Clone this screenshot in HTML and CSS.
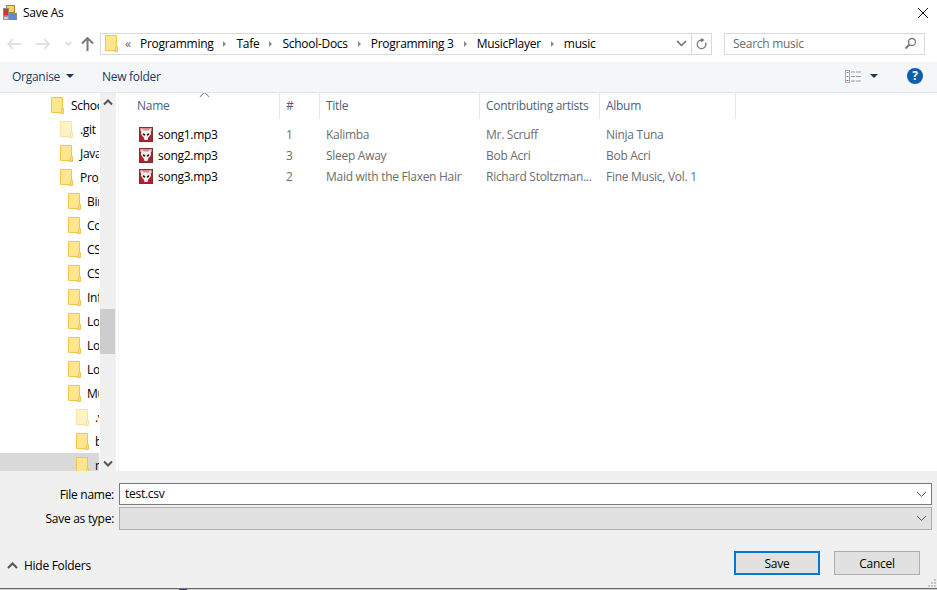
FILE: index.html
```html
<!DOCTYPE html>
<html lang="en">
<head>
<meta charset="UTF-8" />
<title>Save As</title>
<link rel="stylesheet" href="styles.css">
</head>
<body>

<svg class="sprites" width="0" height="0">
  <symbol id="folder" viewBox="0 0 13 17">
    <path d="M.5.5h11v15H.5z" fill="#ffe68f" stroke="#eec64a"/>
    <path d="M10.500 11.500h2v5h-3v-1h1z" fill="#ffe68f" stroke="#eec64a" stroke-width="1"/>
  </symbol>
  <symbol id="music" viewBox="0 0 14 15">
    <rect x=".5" y=".5" width="13" height="14" fill="#b3222a" stroke="#7d3034"/>
    <rect x="1" y="1" width="12" height="3" fill="#d9888a"/>
    <path d="M2.500 1L4.500 3.500h5L11.500 1 12 7 9 11 8.500 13h-3L5 11 2 7z" fill="#f6f2f2"/>
    <ellipse cx="5" cy="7.500" rx="1.400" ry="1" fill="#1c1c1c" transform="rotate(30 5 7.500)"/>
    <ellipse cx="9" cy="7.500" rx="1.400" ry="1" fill="#1c1c1c" transform="rotate(-30 9 7.500)"/>
  </symbol>
</svg>

<div class="dialog">
  <header class="titlebar">
    <svg class="app-icon" width="16" height="16" viewBox="0 0 16 16">
      <rect x="3.500" y=".5" width="8" height="7" fill="#f4d35e" stroke="#a88a2c"/>
      <rect x=".5" y="3.500" width="5" height="7" fill="#d9332b" stroke="#8a8a8a"/>
      <rect x="6.500" y="8.500" width="7" height="6" fill="#4f8fe0" stroke="#8a8a8a"/>
      <rect x=".5" y="11.500" width="5" height="3" fill="#cfcfcf" stroke="#9a9a9a"/>
    </svg>
    <span class="title">Save As</span>
    <svg class="close" width="12" height="12" viewBox="0 0 12 12"><path d="M1 1l10 10M11 1L1 11" stroke="#111" stroke-width="1" fill="none"/></svg>
  </header>

  <nav class="navbar">
    <div class="nav-btns">
      <svg class="nav-back" width="14" height="12" viewBox="0 0 14 12"><path d="M6 1L1 6l5 5M1 6h13" stroke="#e2e2e2" stroke-width="1.800" fill="none"/></svg>
      <svg class="nav-fwd" width="14" height="12" viewBox="0 0 14 12"><path d="M8 1l5 5-5 5M13 6H0" stroke="#e2e2e2" stroke-width="1.800" fill="none"/></svg>
      <svg class="nav-down" width="7" height="5" viewBox="0 0 7 5"><path d="M.5 1l3 3 3-3" stroke="#d4d4d4" stroke-width="1.300" fill="none"/></svg>
      <svg class="nav-up" width="13" height="14" viewBox="0 0 13 14"><path d="M1 6.500l5.500-5.500 5.500 5.500M6.500 1.500V14" stroke="#7a7a7a" stroke-width="2" fill="none"/></svg>
    </div>
    <div class="address">
      <svg class="addr-folder" width="13" height="17"><use href="#folder"/></svg>
      <span class="chev">&laquo;</span>
      <span class="crumb">Programming</span><span class="sep"></span>
      <span class="crumb">Tafe</span><span class="sep"></span>
      <span class="crumb">School-Docs</span><span class="sep"></span>
      <span class="crumb">Programming 3</span><span class="sep"></span>
      <span class="crumb">MusicPlayer</span><span class="sep"></span>
      <span class="crumb">music</span>
      <svg class="addr-down" width="11" height="7" viewBox="0 0 11 7"><path d="M1 1l4.500 4.500L10 1" stroke="#6d6d6d" stroke-width="1.500" fill="none"/></svg>
      <div class="refresh">
        <svg width="11" height="13" viewBox="0 0 11 13"><path d="M5 1.500l2.500 1.500L5 4.700M6.500 3H5.500a4.300 4.300 0 1 0 4 2.500" stroke="#7a7a7a" stroke-width="1.300" fill="none"/></svg>
      </div>
    </div>
    <div class="search">
      <span>Search music</span>
      <svg width="13" height="13" viewBox="0 0 13 13"><circle cx="8" cy="5" r="3.500" stroke="#7a7a7a" stroke-width="1.300" fill="none"/><path d="M5.500 7.500L1.500 11.500" stroke="#7a7a7a" stroke-width="2" fill="none"/></svg>
    </div>
  </nav>

  <div class="toolbar">
    <span class="tool organise">Organise</span>
    <span class="caret"></span>
    <span class="tool new-folder">New folder</span>
    <svg class="views" width="16" height="13" viewBox="0 0 16 13">
      <rect x=".5" y=".5" width="4" height="12" fill="#fff" stroke="#a8a8a8"/>
      <path d="M6 2h10M6 6.500h10M6 11h10" stroke="#9a9a9a" stroke-width="1" stroke-dasharray="4 1 5" fill="none"/>
      <path d="M1.500 10h2v1h-2z" fill="#d33"/>
      <path d="M1.500 2h2v1h-2z M1.500 6h2v1h-2z" fill="#59a"/>
    </svg>
    <span class="caret views-caret"></span>
    <span class="help">?</span>
  </div>

  <main class="panes">
    <div class="tree">
      <div class="tree-row lvl0"><svg width="13" height="17"><use href="#folder"/></svg><span>School-Docs</span></div>
      <div class="tree-row lvl1 hidden-item"><svg width="13" height="17"><use href="#folder"/></svg><span>.git</span></div>
      <div class="tree-row lvl1"><svg width="13" height="17"><use href="#folder"/></svg><span>JavaScript</span></div>
      <div class="tree-row lvl1"><svg width="13" height="17"><use href="#folder"/></svg><span>Programming 3</span></div>
      <div class="tree-row lvl2"><svg width="13" height="17"><use href="#folder"/></svg><span>Binary</span></div>
      <div class="tree-row lvl2"><svg width="13" height="17"><use href="#folder"/></svg><span>Collections</span></div>
      <div class="tree-row lvl2"><svg width="13" height="17"><use href="#folder"/></svg><span>CSV</span></div>
      <div class="tree-row lvl2"><svg width="13" height="17"><use href="#folder"/></svg><span>CSharp</span></div>
      <div class="tree-row lvl2"><svg width="13" height="17"><use href="#folder"/></svg><span>Inf</span></div>
      <div class="tree-row lvl2"><svg width="13" height="17"><use href="#folder"/></svg><span>Logs</span></div>
      <div class="tree-row lvl2"><svg width="13" height="17"><use href="#folder"/></svg><span>Login</span></div>
      <div class="tree-row lvl2"><svg width="13" height="17"><use href="#folder"/></svg><span>Loops</span></div>
      <div class="tree-row lvl2"><svg width="13" height="17"><use href="#folder"/></svg><span>MusicPlayer</span></div>
      <div class="tree-row lvl3 hidden-item"><svg width="13" height="17"><use href="#folder"/></svg><span>.vs</span></div>
      <div class="tree-row lvl3"><svg width="13" height="17"><use href="#folder"/></svg><span>bin</span></div>
      <div class="tree-row lvl3 selected"><svg width="13" height="17"><use href="#folder"/></svg><span>music</span></div>
    </div>
    <div class="scrollbar">
      <svg class="arrow-up" width="10" height="7" viewBox="0 0 10 7"><path d="M1 5.500l4-4 4 4" stroke="#555" stroke-width="2" fill="none"/></svg>
      <div class="thumb"></div>
      <svg class="arrow-down" width="10" height="7" viewBox="0 0 10 7"><path d="M1 1.500l4 4 4-4" stroke="#555" stroke-width="2" fill="none"/></svg>
    </div>
    <div class="files">
      <div class="sort-arrow"></div>
      <div class="grid head">
        <div class="col col-name">Name</div>
        <div class="col">#</div>
        <div class="col">Title</div>
        <div class="col">Contributing artists</div>
        <div class="col">Album</div>
      </div>
      <div class="grid row first">
        <div class="cell-name"><svg width="14" height="15"><use href="#music"/></svg><span>song1.mp3</span></div>
        <div class="cell">1</div><div class="cell">Kalimba</div><div class="cell">Mr. Scruff</div><div class="cell">Ninja Tuna</div>
      </div>
      <div class="grid row">
        <div class="cell-name"><svg width="14" height="15"><use href="#music"/></svg><span>song2.mp3</span></div>
        <div class="cell">3</div><div class="cell">Sleep Away</div><div class="cell">Bob Acri</div><div class="cell">Bob Acri</div>
      </div>
      <div class="grid row">
        <div class="cell-name"><svg width="14" height="15"><use href="#music"/></svg><span>song3.mp3</span></div>
        <div class="cell">2</div><div class="cell">Maid with the Flaxen Hair</div><div class="cell">Richard Stoltzman...</div><div class="cell">Fine Music, Vol. 1</div>
      </div>
    </div>
  </main>

  <footer class="footer">
    <div class="field">
      <label>File name:</label>
      <div class="combo active"><span>test.csv</span><svg width="11" height="7" viewBox="0 0 11 7"><path d="M1 1l4.500 4.500L10 1" stroke="#555" stroke-width="1" fill="none"/></svg></div>
    </div>
    <div class="field type-field">
      <label>Save as type:</label>
      <div class="combo disabled"><span></span><svg width="11" height="7" viewBox="0 0 11 7"><path d="M1 1l4.500 4.500L10 1" stroke="#555" stroke-width="1" fill="none"/></svg></div>
    </div>
    <div class="actions">
      <div class="hide-folders">
        <svg width="11" height="7" viewBox="0 0 11 7"><path d="M1 6l4.500-4.500L10 6" stroke="#555" stroke-width="2" fill="none"/></svg>
        <span>Hide Folders</span>
      </div>
      <button class="btn primary">Save</button>
      <button class="btn">Cancel</button>
    </div>
    <svg class="grip" width="10" height="10" viewBox="0 0 10 10"><path d="M7 1h2v2H7zM4 4h2v2H4zM7 4h2v2H7zM1 7h2v2H1zM4 7h2v2H4zM7 7h2v2H7z" fill="#c4c4c4"/></svg>
  </footer>
</div>
<div class="behind"><span></span></div>

</body>
</html>
```

FILE: styles.css
```css
* {
  box-sizing: border-box;
}
html, body {
  margin: 0;
  padding: 0;
  background: #fff;
}
body {
  font-family: 'Open Sans', sans-serif;
  font-size: 12px;
  letter-spacing: -0.28px;
  color: #000;
  width: 937px;
  height: 590px;
  overflow: hidden;
}
.sprites {
  display: block;
  height: 0;
}
.dialog {
  display: flex;
  flex-direction: column;
  height: 589px;
  border-bottom: 1px solid #6b6b6b;
}
/* sliver of the window behind the dialog */
.behind {
  height: 1px;
  background: #cfcfcf;
}
.behind span {
  display: block;
  width: 8px;
  height: 1px;
  margin-left: 179px;
  background: #3c4a78;
}

/* title */
.titlebar {
  height: 25px;
  flex: none;
  display: flex;
  align-items: center;
  padding: 0 8px 0 3px;
}
.title {
  margin-left: 4px;
}
.close {
  margin-left: auto;
}

/* address row */
.navbar {
  height: 37px;
  flex: none;
  display: flex;
  align-items: center;
  padding: 0 12px 0 0;
}
.nav-btns {
  width: 100px;
  display: flex;
  align-items: center;
  padding-left: 7px;
}
.nav-fwd {
  margin-left: 15px;
}
.nav-down {
  margin-left: 15px;
}
.nav-up {
  margin-left: 9px;
}
.address {
  width: 612px;
  height: 22px;
  border: 1px solid #d9d9d9;
  display: flex;
  align-items: center;
  padding-left: 4px;
}
.chev {
  margin-left: 7px;
  color: #666;
  width: 15px;
}
.crumb {
  white-space: nowrap;
}
.sep {
  width: 0;
  height: 0;
  margin: 0 10px;
  border-left: 3px solid #8a8a8a;
  border-top: 3px solid transparent;
  border-bottom: 3px solid transparent;
}
.addr-down {
  margin-left: auto;
  margin-right: 4px;
}
.refresh {
  width: 20px;
  height: 100%;
  border-left: 1px solid #d9d9d9;
  display: flex;
  align-items: center;
  justify-content: center;
}
.search {
  margin-left: 12px;
  width: 201px;
  height: 22px;
  border: 1px solid #d9d9d9;
  display: flex;
  align-items: center;
  justify-content: space-between;
  padding: 0 7px 0 8px;
  color: #6d6d6d;
}

/* toolbar */
.toolbar {
  height: 31px;
  flex: none;
  background: #f5f6f7;
  border-bottom: 1px solid #e6e6e6;
  display: flex;
  align-items: center;
  padding: 0 14px 2px 12px;
  color: #1e395b;
}
.caret {
  width: 0;
  height: 0;
  margin-left: 6px;
  border-top: 4px solid #1e395b;
  border-left: 4px solid transparent;
  border-right: 4px solid transparent;
}
.new-folder {
  margin-left: 28px;
}
.views {
  margin-left: auto;
}
.views-caret {
  margin-left: 9px;
}
.help {
  margin-left: 29px;
  width: 16px;
  height: 16px;
  border-radius: 50%;
  background: #0a5fb4;
  color: #fff;
  font-weight: 700;
  text-align: center;
  line-height: 16px;
}

/* panes */
.panes {
  flex: 1;
  min-height: 0;
  display: flex;
  overflow: hidden;
}
.tree {
  width: 100px;
  flex: none;
  overflow: hidden;
}
.tree-row {
  height: 24px;
  display: flex;
  align-items: center;
  gap: 7px;
  overflow: hidden;
  white-space: nowrap;
  width: 99px;
}
.tree-row svg {
  flex: none;
}
.lvl0 { padding-left: 51px; }
.lvl1 { padding-left: 60px; }
.lvl2 { padding-left: 68px; gap: 6px; }
.lvl3 { padding-left: 76px; gap: 6px; }
.hidden-item svg {
  opacity: 0.5;
}
.selected {
  background: #d9d9d9;
}
.scrollbar {
  width: 16px;
  flex: none;
  background: #f0f0f0;
  display: flex;
  flex-direction: column;
  align-items: center;
  position: relative;
}
.arrow-up {
  margin-top: 6px;
}
.arrow-down {
  margin-top: auto;
  margin-bottom: 4px;
}
.thumb {
  width: 15px;
  height: 45px;
  background: #cdcdcd;
  margin-top: 203px;
  align-self: flex-start;
}
.files {
  flex: 1;
  margin-left: 2px;
  border-left: 1px solid #f5f5f5;
  position: relative;
}
.sort-arrow {
  position: absolute;
  left: 82px;
  top: 0;
  width: 7px;
  height: 7px;
  border-left: 1px solid #8a8a8a;
  border-top: 1px solid #8a8a8a;
  transform: rotate(45deg);
}
.grid {
  display: grid;
  grid-template-columns: 161px 40px 160px 120px 136px;
  width: 617px;
}
.head {
  height: 25px;
  color: #4c607a;
}
.col {
  padding-left: 6px;
  line-height: 26px;
  border-right: 1px solid #e5e5e5;
  white-space: nowrap;
}
.col-name {
  padding-left: 18px;
}
.row {
  height: 21px;
  align-items: center;
  color: #6d6d6d;
}
.first {
  margin-top: 6px;
}
.cell {
  padding-left: 6px;
  white-space: nowrap;
}
.cell-name {
  display: flex;
  align-items: center;
  gap: 5px;
  padding-left: 20px;
  color: #000;
}

/* footer */
.footer {
  height: 117px;
  flex: none;
  background: #f0f0f0;
  display: flex;
  flex-direction: column;
  padding: 12px 5px 0 0;
  position: relative;
}
.field {
  display: flex;
  align-items: center;
}
.field label {
  width: 114px;
  text-align: right;
}
.type-field {
  margin-top: 2px;
}
.combo {
  margin-left: 5px;
  flex: 1;
  display: flex;
  align-items: center;
  justify-content: space-between;
  padding: 0 4px 0 5px;
}
.combo.active {
  height: 22px;
  background: #fff;
  border: 1px solid #7a7a7a;
}
.combo.active span {
  margin-top: -2px;
}
.combo.disabled {
  height: 23px;
  background: #e1e1e1;
  border: 1px solid #adadad;
}
.actions {
  display: flex;
  align-items: center;
  margin-top: 21px;
  padding-right: 12px;
}
.hide-folders {
  display: flex;
  align-items: center;
  gap: 6px;
  padding-left: 7px;
  margin-right: auto;
  margin-top: 5px;
}
.btn {
  font: inherit;
  letter-spacing: inherit;
  width: 86px;
  height: 24px;
  padding: 0;
  background: #e1e1e1;
  border: 1px solid #adadad;
  color: #000;
  margin-left: 14px;
}
.btn.primary {
  border: 2px solid #0078d7;
}
.grip {
  position: absolute;
  right: 0;
  bottom: 0;
}
```
